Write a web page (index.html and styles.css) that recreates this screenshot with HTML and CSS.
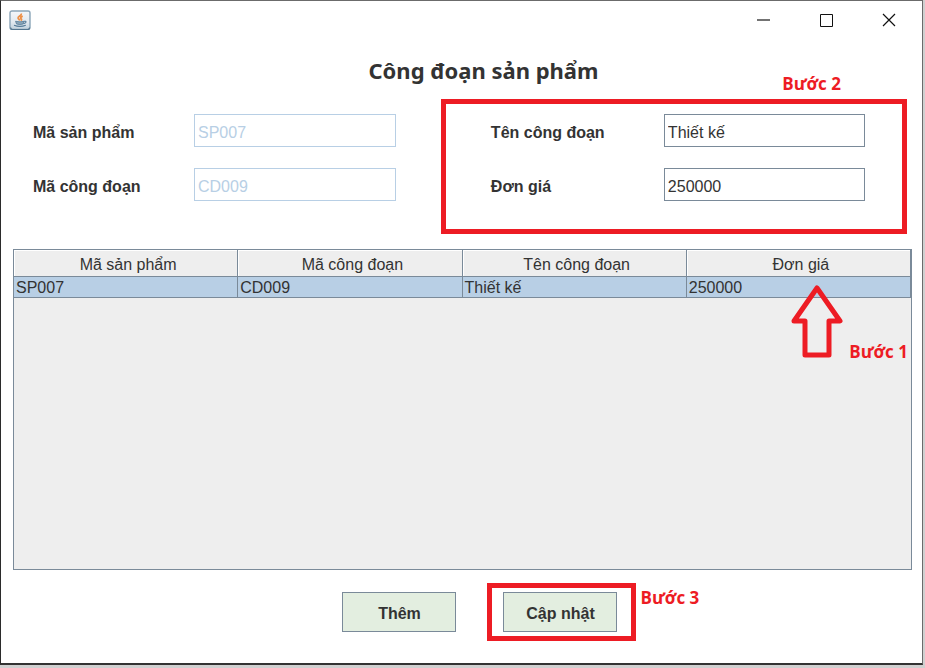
FILE: index.html
```html
<!DOCTYPE html>
<html lang="vi">
<head>
<meta charset="utf-8">
<title>Công đoạn sản phẩm</title>
<link rel="stylesheet" href="styles.css">
</head>
<body>
<div class="window">
  <header class="titlebar">
    <svg class="app-icon" viewBox="0 0 22 20" aria-hidden="true">
      <defs>
        <linearGradient id="tile" x1="0" y1="0" x2="0" y2="1">
          <stop offset="0" stop-color="#f4f7fa"/>
          <stop offset=".6" stop-color="#e2e9ef"/>
          <stop offset="1" stop-color="#c0d0dc"/>
        </linearGradient>
      </defs>
      <rect x="1" y="1" width="20" height="18.5" rx="2" fill="url(#tile)" stroke="#8ba5b8" stroke-width="1.4"/>
      <path d="M1.6 17.5q0 2 2 2h15q2 0 2-2" fill="none" stroke="#54768f" stroke-width="1.2"/>
      <path d="M12.3 3.4c.7 2.3-3.700 2.700-3.200 4.700.2 1 1.600 1.500 1.400 2.500M13.700 6.200c-2.300.9-2.400 1.800-1.500 2.600.6.600.3 1.200-.3 1.700" fill="none" stroke="#ee9148" stroke-width="1.800"/>
      <path d="M6.500 11.300q4.500 1 8.500 0l-.9 2.700q-3.200 1-6.500 0z" fill="#8ba6b8" stroke="#547a97" stroke-width=".8"/>
      <path d="M15 11.300q2.300-.4 1.900.9-.4 1-2.500 1.400M5 15.200q6 2.300 11.800 0" fill="none" stroke="#547a97" stroke-width="1.100"/>
    </svg>
    <div class="controls">
      <button type="button" aria-label="Thu nhỏ"><svg viewBox="0 0 14 14"><path d="M1 7h13" stroke="#444" stroke-width="1.500"/></svg></button>
      <button type="button" aria-label="Phóng to"><svg viewBox="0 0 14 14"><path d="M1.500 1.500h12v12h-12z" fill="none" stroke="#111"/></svg></button>
      <button type="button" aria-label="Đóng"><svg viewBox="0 0 14 14"><path d="M1 1l12 12M13 1L1 13" stroke="#111" stroke-width="1.200"/></svg></button>
    </div>
  </header>

  <h1>Công đoạn sản phẩm</h1>

  <form class="details">
    <div class="fields">
      <label for="product">Mã sản phẩm</label>
      <input id="product" type="text" value="SP007" disabled>
      <label for="stage">Mã công đoạn</label>
      <input id="stage" type="text" value="CD009" disabled>
    </div>
    <div class="fields marked">
      <label for="name">Tên công đoạn</label>
      <input id="name" type="text" value="Thiết kế">
      <label for="price">Đơn giá</label>
      <input id="price" type="text" value="250000">
      <span class="step step-two">Bước 2</span>
    </div>
  </form>

  <div class="table-pane">
    <table>
      <thead>
        <tr><th>Mã sản phẩm</th><th>Mã công đoạn</th><th>Tên công đoạn</th><th>Đơn giá</th></tr>
      </thead>
      <tbody>
        <tr><td>SP007</td><td>CD009</td><td>Thiết kế</td><td>250000</td></tr>
      </tbody>
    </table>
    <svg class="arrow" viewBox="0 0 54 75" aria-hidden="true">
      <path d="M27 4L50 37H39V71H15V37H4z" fill="none" stroke="#ed1c24" stroke-width="5" stroke-linejoin="round"/>
    </svg>
    <span class="step step-one">Bước 1</span>
  </div>

  <footer class="actions">
    <button type="button" class="action">Thêm</button>
    <div class="marked-action">
      <button type="button" class="action">Cập nhật</button>
      <span class="step step-three">Bước 3</span>
    </div>
  </footer>
</div>
</body>
</html>
```
FILE: styles.css
```css
* {
  box-sizing: border-box;
}

body {
  margin: 0;
  height: 100vh;
  padding: 0 2px 3px 0;
  background: #d0d0d0;
  color: #333;
  font: 16px/20px "Liberation Sans", Arial, sans-serif;
}

.window {
  display: flex;
  flex-direction: column;
  height: 100%;
  background: #fff;
  border: 1px solid #6b6b6b;
  border-left-color: #2b2b2b;
  border-bottom: 2px solid #333;
}

.titlebar {
  display: flex;
  justify-content: space-between;
  align-items: center;
  height: 38px;
  padding: 0 26px 0 8px;
}

.app-icon {
  width: 22px;
  height: 20px;
}

.controls {
  display: flex;
  gap: 49px;
}

.controls button {
  display: block;
  width: 14px;
  height: 14px;
  padding: 0;
  border: 0;
  background: none;
}

.controls svg {
  display: block;
}

h1 {
  margin: 16px 0 13px;
  padding-left: 44px;
  font: bold 22px/31px "Noto Sans", Tahoma, sans-serif;
  text-align: center;
}

.details {
  display: grid;
  grid-template-columns: 7fr 8fr;
  align-items: start;
  padding: 0 15px 0 32px;
}

.fields {
  display: grid;
  grid-template-columns: 161px 1fr;
  grid-auto-rows: 33px;
  row-gap: 21px;
  align-items: center;
  padding: 15px 45px 0 0;
}

.marked {
  position: relative;
  grid-template-columns: 173px 1fr;
  padding: 10px 37px 28px 45px;
  border: 5px solid #ed1c24;
}

.fields label {
  padding-top: 4px;
  font-weight: bold;
}

.fields input {
  width: 100%;
  height: 33px;
  padding: 4px 3px 0;
  border: 1px solid #7a8a99;
  border-radius: 0;
  background: #fff;
  color: #333;
  font: inherit;
}

.fields input:disabled {
  border-color: #b8cfe5;
  color: #b8cfe5;
}

.table-pane {
  position: relative;
  flex: 1;
  margin: 15px 10px 20px 12px;
  border: 1px solid #7a8a99;
  background: #eee;
}

table {
  width: 100%;
  table-layout: fixed;
  border-collapse: separate;
  border-spacing: 0;
}

th,
td {
  padding: 2px 2px 0;
  border-right: 1px solid #7a8a99;
  border-bottom: 1px solid #7a8a99;
  line-height: 18px;
}

th {
  height: 27px;
  padding: 4px 0 0 5px;
  box-shadow: inset 1px 1px #fff;
  font-weight: normal;
}

td {
  height: 21px;
  background: #b8cfe5;
}

.step {
  position: absolute;
  color: #ed1c24;
  font: bold 17px/22px "Open Sans", Calibri, sans-serif;
  white-space: nowrap;
}

.step-one {
  top: 91px;
  right: 3px;
}

.step-two {
  right: 61px;
  bottom: 134px;
}

.step-three {
  top: -1px;
  left: 149px;
}

.arrow {
  position: absolute;
  top: 34px;
  right: 67px;
  width: 54px;
  height: 75px;
}

.actions {
  display: flex;
  justify-content: center;
  align-items: center;
  gap: 31px;
  height: 58px;
  margin: -7px 0 22px;
  padding-left: 54px;
}

.action {
  display: block;
  width: 114px;
  height: 40px;
  padding: 3px 0 0 2px;
  border: 1px solid #7a8a99;
  border-radius: 0;
  background: #e3eee0;
  color: #333;
  font: inherit;
  font-weight: bold;
}

.marked-action {
  position: relative;
  padding: 4px 14px 4px 11px;
  border: 5px solid #ed1c24;
}
```
